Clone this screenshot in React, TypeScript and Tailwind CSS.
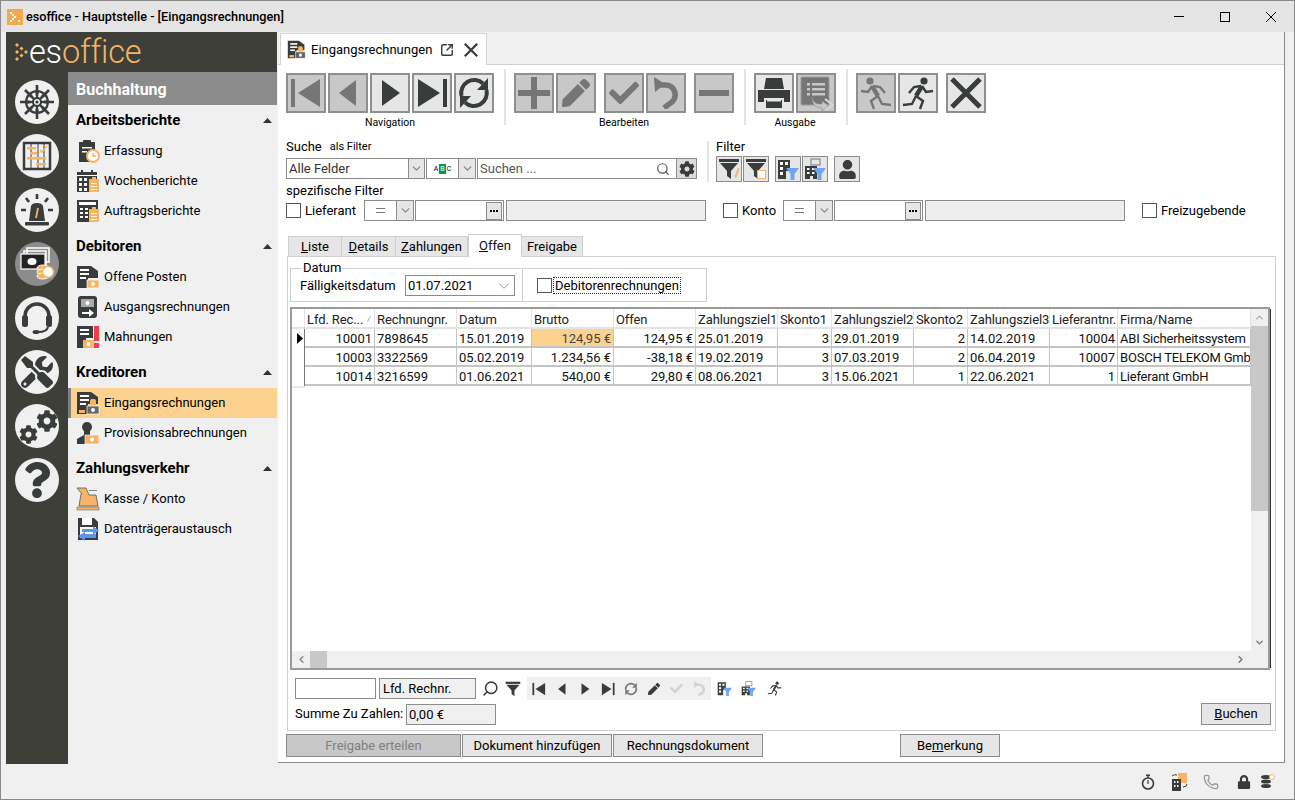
import React from "react";
import { FaCog, FaTools, FaQuestion, FaUser, FaPen, FaCheck, FaLock } from "react-icons/fa";
import { SquareArrowOutUpRight, ChevronDown, ChevronUp, ChevronLeft, ChevronRight, Search, Phone } from "lucide-react";

const DARK = "#383d3b";
const OR = "#f5b565";

const Svg = ({ s = 24, children, vb = "0 0 24 24", className = "" }: { s?: number; children: React.ReactNode; vb?: string; className?: string }) => (
  <svg width={s} height={s} viewBox={vb} className={`shrink-0 ${className}`}>{children}</svg>
);

type NavP = { c: string; s?: number };
const First = ({ c, s = 32 }: NavP) => <Svg s={s} vb="0 0 32 32"><rect x="1" y="2" width="4" height="28" fill={c} /><path d="M30 2V30L8 16Z" fill={c} /></Svg>;
const Prev = ({ c, s = 32 }: NavP) => <Svg s={s} vb="0 0 32 32"><path d="M24 3V29L7 16Z" fill={c} /></Svg>;
const Next = ({ c, s = 32 }: NavP) => <Svg s={s} vb="0 0 32 32"><path d="M8 3V29L26 16Z" fill={c} /></Svg>;
const Last = ({ c, s = 32 }: NavP) => <Svg s={s} vb="0 0 32 32"><rect x="27" y="2" width="4" height="28" fill={c} /><path d="M2 2V30L24 16Z" fill={c} /></Svg>;
const Sync = ({ c, s = 34 }: NavP) => (
  <Svg s={s} vb="0 0 34 34">
    <path d="M4.5 20A13 13 0 0 1 26 7.5" fill="none" stroke={c} strokeWidth="4" />
    <path d="M29.5 14A13 13 0 0 1 8 26.5" fill="none" stroke={c} strokeWidth="4" />
    <path d="M31 2V14H20Z" fill={c} /><path d="M3 32V20H14Z" fill={c} />
  </Svg>
);
const Undo = ({ c, s = 32 }: NavP) => (
  <Svg s={s} vb="0 0 32 32">
    <path d="M9 8H15C25 8 28 19 22 25L14 31" fill="none" stroke={c} strokeWidth="5.5" />
    <path d="M4 0L5 15L15 7Z" fill={c} />
  </Svg>
);
const Runner = ({ c, s = 34, mirror = false }: { c: string; s?: number; mirror?: boolean }) => (
  <Svg s={s} vb="0 0 34 34" className={mirror ? "-scale-x-100" : ""}>
    <circle cx="23" cy="5" r="3.6" fill={c} />
    <path d="M21 10L15 20" stroke={c} strokeWidth="4.4" fill="none" />
    <path d="M20 10L13 11L8 17M21 10L25 16L32 15M15 20L22 25L19 33M15 20L11 28L2 29" stroke={c} strokeWidth="2.4" fill="none" />
  </Svg>
);
const DocSend = ({ c }: { c: string }) => (
  <Svg s={36} vb="0 0 36 36">
    <rect x="3" y="2" width="28" height="28" rx="1" fill={c} stroke="#9a9a9a" strokeWidth="1" />
    <g fill="#c8c8c8"><rect x="9" y="8" width="3" height="2.5" /><rect x="14" y="8" width="13" height="2.5" /><rect x="9" y="13" width="3" height="2.5" /><rect x="14" y="13" width="13" height="2.5" /><rect x="9" y="18" width="3" height="2.5" /><rect x="14" y="18" width="13" height="2.5" /></g>
    <path d="M14 22Q15 30 24 29V26L31 31L24 36V33Q14 33 14 22Z" fill="#c8c8c8" stroke="#8a8a8a" strokeWidth=".6" />
    <path d="M27 24L35 30L27 35" fill="none" stroke="#d8d8d8" strokeWidth="2" />
  </Svg>
);
const Printer = () => (
  <Svg s={34} vb="0 0 34 34">
    <path d="M9 2H25L27 13H7Z" fill={DARK} />
    <path d="M1 14H33V26H27V22H7V26H1Z" fill={DARK} />
    <rect x="9" y="24" width="16" height="8" fill={DARK} />
    <rect x="10" y="24" width="14" height="1.5" fill="#e6e6e6" />
  </Svg>
);
const Cross = ({ c = DARK, s = 36, w = 5, className = "" }: { c?: string; s?: number; w?: number; className?: string }) => (
  <Svg s={s} vb="0 0 36 36" className={className}><path d="M4 4L32 32M32 4L4 32" stroke={c} strokeWidth={w} fill="none" /></Svg>
);
const Plus = ({ c }: { c: string }) => <Svg s={34} vb="0 0 34 34"><path d="M14 1H20V14H33V20H20V33H14V20H1V14H14Z" fill={c} /></Svg>;
const Minus = ({ c }: { c: string }) => <Svg s={32} vb="0 0 32 32"><rect x="1" y="13" width="30" height="6" fill={c} /></Svg>;

const Funnel = ({ c = DARK, s = 22 }: { c?: string; s?: number }) => (
  <Svg s={s} vb="0 0 22 22"><rect x="1" y="1" width="20" height="3" fill={c} /><path d="M2 5H20L13 13V21L9 18V13Z" fill={c} /></Svg>
);
const Build = ({ s = 22, stack = false, blue = "#6fa5f5" }: { s?: number; stack?: boolean; blue?: string }) => (
  <Svg s={s} vb="0 0 22 22">
    {stack && <g fill="none" stroke="#777"><rect x="7" y="1" width="9" height="6" /></g>}
    <path d={stack ? "M1 8H13V21H9V18H6V21H1Z" : "M1 2H13V13H9V21H1Z"} fill={DARK} />
    <g fill="#fff">{stack ? <><rect x="3" y="10" width="2.5" height="2" /><rect x="8" y="10" width="2.5" height="2" /><rect x="3" y="14" width="2.5" height="2" /><rect x="8" y="14" width="2.5" height="2" /></> : <><rect x="3" y="4" width="3" height="3" /><rect x="8" y="4" width="3" height="3" /><rect x="3" y="9" width="3" height="3" /><rect x="3" y="14" width="3" height="3" /></>}</g>
    <path d="M9 10H22L17.5 16V22H13.5V16Z" fill={blue} />
  </Svg>
);

const TB = ({ dis, children }: { dis?: boolean; children: React.ReactNode }) => (
  <div className={`w-[40px] h-[40px] border-2 border-[#8f8f8f] flex items-center justify-center shrink-0 ${dis ? "bg-[#c8c8c8]" : "bg-[#e6e6e6]"}`}>{children}</div>
);
const G = "#767676";
const Sep = () => <div className="w-[2px] h-[56px] bg-[#e4e4e4] shrink-0" />;
const Lab = ({ children }: { children: React.ReactNode }) => <div className="text-[10.5px] leading-[14px] text-center mt-[3px] h-[12px]">{children}</div>;

const Toolbar = () => (
  <div className="flex items-start h-[56px] mt-[4px] pl-[8px]">
    <div className="pt-[4px] w-[208px] mr-[10px]">
      <div className="flex gap-[2px]">
        <TB dis><First c={G} /></TB><TB dis><Prev c={G} /></TB><TB><Next c={DARK} /></TB><TB><Last c={DARK} /></TB><TB><Sync c={DARK} /></TB>
      </div>
      <Lab>Navigation</Lab>
    </div>
    <Sep />
    <div className="pt-[4px] w-[220px] ml-[8px] mr-[10px]">
      <div className="flex">
        <div className="flex gap-[2px]"><TB dis><Plus c={G} /></TB><TB dis><FaPen size={28} color={G} /></TB></div>
        <div className="flex gap-[2px] ml-[8px]"><TB dis><FaCheck size={30} color={G} /></TB><TB dis><Undo c={G} /></TB></div>
        <div className="ml-[8px]"><TB dis><Minus c={G} /></TB></div>
      </div>
      <Lab>Bearbeiten</Lab>
    </div>
    <Sep />
    <div className="pt-[4px] w-[82px] ml-[8px] mr-[10px]">
      <div className="flex gap-[2px]"><TB><Printer /></TB><TB dis><DocSend c={G} /></TB></div>
      <Lab>Ausgabe</Lab>
    </div>
    <Sep />
    <div className="pt-[4px] ml-[8px] flex">
      <div className="flex gap-[2px]"><TB dis><Runner c={G} mirror /></TB><TB><Runner c={DARK} /></TB></div>
      <div className="ml-[8px]"><TB><Cross /></TB></div>
    </div>
  </div>
);

const DD = ({ w = "w-[16px]" }: { w?: string }) => (
  <div className={`${w} h-full bg-[#e6e6e6] border-l border-[#8c8c8c] flex items-center justify-center shrink-0`}><ChevronDown size={13} strokeWidth={2.5} color="#8a8a8a" /></div>
);
const Check = ({ className = "" }: { className?: string }) => <div className={`w-[15px] h-[15px] border border-[#555] bg-white shrink-0 ${className}`} />;
const Box = ({ className = "", children }: { className?: string; children?: React.ReactNode }) => <div className={`border border-[#8c8c8c] bg-white flex items-center shrink-0 ${className}`}>{children}</div>;
const FB = ({ children }: { children: React.ReactNode }) => <div className="w-[26px] h-[26px] border border-[#8c8c8c] bg-[#e6e6e6] flex items-center justify-center shrink-0 relative">{children}</div>;

const Op = () => (
  <Box className="w-[50px] h-[21px]"><div className="flex-1 flex justify-center text-[#666]"><div className="w-[9px] h-[5px] border-y border-[#777]" /></div><DD w="w-[17px]" /></Box>
);
const Picker = () => (
  <>
    <Box className="w-[89px] h-[21px] ml-px justify-end"><div className="w-[16px] h-[18px] mr-px border border-[#8c8c8c] bg-[#e6e6e6] flex items-center justify-center gap-px"><i className="w-[2px] h-[2px] bg-black" /><i className="w-[2px] h-[2px] bg-black" /><i className="w-[2px] h-[2px] bg-black" /></div></Box>
    <div className="w-[200px] h-[21px] ml-[2px] bg-[#eeeeee] border border-[#8c8c8c] shrink-0" />
  </>
);

const SearchArea = () => (
  <div className="pl-[8px]">
    <div className="flex mt-[14px] h-[43px]">
      <div className="w-[421px]">
        <div className="h-[19px] flex items-center pb-[3px]"><span>Suche</span><span className="text-[11px] ml-[8px]">als Filter</span></div>
        <div className="flex h-[21px]">
          <Box className="w-[139px] h-full pl-[2px] justify-between text-[#333]"><span>Alle Felder</span><DD /></Box>
          <Box className="w-[50px] h-full ml-px justify-between">
            <span className="flex-1 flex justify-center items-center text-[7px] leading-[10px]">A<span className="bg-[#0a9a3a] text-white px-px mx-px">B</span>C</span><DD w="w-[17px]" />
          </Box>
          <Box className="w-[200px] h-full ml-px pl-[2px] justify-between text-[#555]"><span>Suchen ...</span><Search size={14} color="#555" className="mr-[6px]" /></Box>
          <div className="w-[20px] h-full bg-[#dcdcdc] border border-[#8c8c8c] border-l-0 flex items-center justify-center"><FaCog size={16} color={DARK} /></div>
        </div>
      </div>
      <div className="w-[2px] h-[41px] mt-[2px] bg-[#e4e4e4]" />
      <div className="ml-[7px]">
        <div className="h-[17px] leading-[15px]">Filter</div>
        <div className="flex">
          <div className="flex gap-px">
            <FB><Funnel /><span className="absolute right-[3px] bottom-[3px] w-[2px] h-[10px] bg-[#f5b565] rotate-[20deg]" /></FB>
            <FB><Funnel /><span className="absolute right-[2px] bottom-[2px] w-[9px] h-[9px] border border-[#f5b565] bg-white" /></FB>
          </div>
          <div className="flex gap-px ml-[6px]"><FB><Build /></FB><FB><Build stack /></FB></div>
          <div className="ml-[6px]"><FB><FaUser size={19} color={DARK} /></FB></div>
        </div>
      </div>
    </div>
    <div className="h-[21px] -mt-[3px] leading-[24px]">spezifische Filter</div>
    <div className="flex items-center h-[21px]">
      <Check /><span className="ml-[4px] w-[59px]">Lieferant</span>
      <Op /><Picker />
      <Check className="ml-[17px]" /><span className="ml-[4px] w-[41px]">Konto</span>
      <Op /><Picker />
      <Check className="ml-[17px]" /><span className="ml-[4px]">Freizugebende</span>
    </div>
  </div>
);

const U = ({ children }: { children: React.ReactNode }) => <span className="underline">{children}</span>;
const Tab = ({ w, active, children }: { w: string; active?: boolean; children: React.ReactNode }) => (
  <div className={`${w} flex items-center justify-center shrink-0 border-t border-x border-[#cfcfcf] ${active ? "h-[23px] bg-white relative z-10 -mb-px text-[#111]" : "h-[20px] bg-[#e6e6e6] -ml-px first:ml-0"}`}>{children}</div>
);

const widths = ["w-[13px]", "w-[70px]", "w-[82px]", "w-[75px]", "w-[82px]", "w-[82px]", "w-[82px]", "w-[54px]", "w-[82px]", "w-[54px]", "w-[82px]", "w-[68px]", "w-[133px]"];
const head = ["", "Lfd. Rec...", "Rechnungnr.", "Datum", "Brutto", "Offen", "Zahlungsziel1", "Skonto1", "Zahlungsziel2", "Skonto2", "Zahlungsziel3", "Lieferantnr.", "Firma/Name"];
const rows = [
  ["10001", "7898645", "15.01.2019", "124,95 €", "124,95 €", "25.01.2019", "3", "29.01.2019", "2", "14.02.2019", "10004", "ABI Sicherheitssystem"],
  ["10003", "3322569", "05.02.2019", "1.234,56 €", "-38,18 €", "19.02.2019", "3", "07.03.2019", "2", "06.04.2019", "10007", "BOSCH TELEKOM Gmb"],
  ["10014", "3216599", "01.06.2021", "540,00 €", "29,80 €", "08.06.2021", "3", "15.06.2021", "1", "22.06.2021", "1", "Lieferant GmbH"],
];
const right = new Set([0, 3, 4, 6, 8, 10]);

const Grid = () => (
  <div className="ml-[2px] mt-[5px] w-[980px] h-[363px] border-2 border-[#9a9a9a] flex flex-col relative after:content-[''] after:absolute after:right-[-3px] after:top-0 after:bottom-0 after:w-px after:bg-[#333]">
    <div className="flex flex-1 min-h-0">
      <div className="w-[959px] overflow-hidden">
        <table className="table-fixed border-separate border-spacing-0 w-[959px]">
          <thead>
            <tr>
              {head.map((h, i) => (
                <th key={i} className={`${widths[i]} h-[20px] font-normal text-left pl-[2px] pr-0 pt-[3px] pb-0 leading-[15px] tracking-[-0.1px] border-r border-b-2 border-[#e4e4e4] whitespace-nowrap overflow-hidden text-[#222]`}>
                  {i === 1 ? <span className="flex items-center justify-between pr-[3px]">{h}<span className="text-[9px] text-[#777]">⁄</span></span> : h}
                </th>
              ))}
            </tr>
          </thead>
          <tbody>
            {rows.map((r, ri) => (
              <tr key={ri}>
                <td className="h-[19px] border-r border-r-[#777] p-0 w-[13px]">
                  {ri === 0 && <svg width="6" height="11" viewBox="0 0 6 11" className="ml-[5px]"><path d="M0 0L6 5.5L0 11Z" fill="#000" /></svg>}
                </td>
                {r.map((c, i) => (
                  <td key={i} className={`h-[19px] pt-[2px] pb-0 pl-[2px] ${i === 11 ? "pr-0 tracking-[-0.2px]" : "pr-[2px]"} leading-[15px] border-b-2 border-r border-[#c4c4c4] whitespace-nowrap overflow-hidden ${right.has(i) ? "text-right" : "text-left"} ${ri === 0 && i === 3 ? "bg-[#fdd28f] text-[#444]" : "text-[#111]"}`}>{c}</td>
                ))}
              </tr>
            ))}
            <tr><td className="h-[2px] p-0 bg-[#ececec]" /></tr>
          </tbody>
        </table>
      </div>
      <div className="w-[17px] bg-[#f0f0f0] flex flex-col items-center shrink-0">
        <div className="h-[17px] flex items-center"><ChevronUp size={11} strokeWidth={3} color="#aaa" /></div>
        <div className="h-[185px] w-full bg-[#c8c8c8]" />
        <div className="flex-1" />
        <div className="h-[17px] flex items-center"><ChevronDown size={11} strokeWidth={3} color="#777" /></div>
      </div>
    </div>
    <div className="h-[17px] bg-[#f0f0f0] flex items-center shrink-0">
      <div className="w-[18px] flex justify-center"><ChevronLeft size={11} strokeWidth={3} color="#888" /></div>
      <div className="w-[17px] h-full bg-[#c8c8c8]" />
      <div className="flex-1" />
      <div className="w-[20px] flex justify-center"><ChevronRight size={11} strokeWidth={3} color="#777" /></div>
      <div className="w-[18px]" />
    </div>
  </div>
);

const Mini = ({ children, w = "w-[23px]" }: { children: React.ReactNode; w?: string }) => <div className={`${w} flex justify-center items-center shrink-0`}>{children}</div>;
const BottomBar = () => (
  <div className="pl-[7px] pr-[4px]">
    <div className="flex items-center h-[21px] mt-[8px]">
      <Box className="w-[81px] h-[21px]" />
      <div className="w-[97px] h-[21px] ml-[3px] bg-[#f0f0f0] border border-[#8c8c8c] pl-[3px] leading-[19px] shrink-0">Lfd. Rechnr.</div>
      <Search size={17} strokeWidth={2.2} color={DARK} className="ml-[6px] -scale-x-100 shrink-0" />
      <div className="ml-[6px]"><Funnel s={16} c={DARK} /></div>
      <div className="ml-[6px] h-[23px] w-[184px] bg-[#f0f0f0] flex items-center shrink-0">
        <Mini><First c={DARK} s={14} /></Mini>
        <Mini><Prev c={DARK} s={14} /></Mini>
        <Mini><Next c={DARK} s={14} /></Mini>
        <Mini><Last c={DARK} s={14} /></Mini>
        <Mini><Sync c={G} s={14} /></Mini>
        <Mini><FaPen size={12} color={DARK} /></Mini>
        <Mini><FaCheck size={13} color="#d4d4d4" /></Mini>
        <Mini><Undo c="#d4d4d4" s={15} /></Mini>
      </div>
      <Mini w="w-[26px]"><Build s={15} /></Mini>
      <Mini><Build s={15} stack /></Mini>
      <Mini w="w-[28px]"><Runner c={DARK} s={15} /></Mini>
    </div>
    <div className="flex items-center justify-between h-[22px] mt-[4px]">
      <div className="flex items-center">
        <span className="w-[111px]">Summe Zu Zahlen:</span>
        <div className="w-[90px] h-[21px] bg-[#f0f0f0] border border-[#8c8c8c] pl-[2px] leading-[19px]">0,00 €</div>
      </div>
      <div className="w-[70px] h-[22px] bg-[#e6e6e6] border border-[#8c8c8c] flex items-center justify-center"><span><U>B</U>uchen</span></div>
    </div>
  </div>
);

const Btn = ({ w, dis, className = "", children }: { w: string; dis?: boolean; className?: string; children: React.ReactNode }) => (
  <div className={`${w} h-[23px] border border-[#8c8c8c] flex items-center justify-center shrink-0 ${dis ? "bg-[#c8c8c8] text-[#808080]" : "bg-[#e6e6e6]"} ${className}`}>{children}</div>
);

const Content = () => (
  <div className="w-[1007px] bg-white border-r border-b border-[#8a8a8a] mb-[1px] flex flex-col">
    <div className="h-[33px] bg-[#f0f0f0] border-b border-[#cfcfcf] pl-[2px] flex items-end shrink-0">
      <div className="w-[207px] h-[32px] -mb-px bg-white border-t border-x border-[#d4d4d4] flex items-center pl-[6px]">
        <DocMoney s={19} />
        <span className="ml-[5px] w-[129px] leading-[17px] whitespace-nowrap">Eingangsrechnungen</span>
        <SquareArrowOutUpRight size={14} strokeWidth={2.4} color={DARK} className="shrink-0" />
        <Cross s={16} w={5} className="ml-[9px]" />
      </div>
    </div>
    <Toolbar />
    <SearchArea />
    <div className="ml-[10px] mt-[13px] flex items-end h-[22px]">
      <Tab w="w-[54px]"><U>L</U>iste</Tab>
      <Tab w="w-[55px]"><U>D</U>etails</Tab>
      <Tab w="w-[73px]"><U>Z</U>ahlungen</Tab>
      <Tab w="w-[54px]" active><U>O</U>ffen</Tab>
      <Tab w="w-[62px]">Freigabe</Tab>
    </div>
    <div className="ml-[9px] w-[989px] h-[475px] border border-[#cfcfcf] shrink-0">
      <div className="ml-[2px] mt-[11px] w-[417px] h-[34px] border border-[#cfcfcf] flex items-center relative">
        <span className="absolute left-[11px] -top-[9px] bg-white px-px leading-[16px]">Datum</span>
        <div className="w-[232px] h-full border-r border-[#cfcfcf] flex items-center pl-[9px] pt-[1px]">
          <span className="w-[105px]">Fälligkeitsdatum</span>
          <Box className="w-[110px] h-[21px] pl-[2px] justify-between"><span>01.07.2021</span><ChevronDown size={18} strokeWidth={1} color="#777" className="mr-px" /></Box>
        </div>
        <Check className="ml-[14px] border-[#444]" />
        <span className="ml-[2px] outline-1 outline-dotted outline-[#333] leading-[15px] px-px">Debitorenrechnungen</span>
      </div>
      <Grid />
      <BottomBar />
    </div>
    <div className="flex ml-[8px] mt-[3px]">
      <Btn w="w-[175px]" dis>Freigabe erteilen</Btn>
      <Btn w="w-[150px]" className="ml-px">Dokument hinzufügen</Btn>
      <Btn w="w-[150px]" className="ml-px">Rechnungsdokument</Btn>
      <Btn w="w-[100px]" className="ml-[137px]"><span>Be<U>m</U>erkung</span></Btn>
    </div>
  </div>
);

function DocMoney({ s = 24, variant = "in" }: { s?: number; variant?: string }) {
  return (
    <Svg s={s} vb="0 0 24 24">
      <path d="M1 1H15L22 6V13H12V23H1Z" fill={DARK} />
      <g fill="#fff"><rect x="4" y="4" width="9" height="2" /><rect x="4" y="8" width="9" height="2" /><rect x="4" y="12" width="6" height="2" /></g>
      {variant === "in" && <rect x="14" y="8" width="6" height="8" rx="2" fill={OR} />}
      {variant === "in" && <rect x="3" y="19" width="6" height="3" fill={OR} />}
      <rect x="11" y="15" width="12" height="8" fill={variant === "in" ? "#666" : OR} stroke="#fff" strokeWidth=".7" />
      <circle cx="17" cy="19" r="2" fill="#fff" />
    </Svg>
  );
}
const ClipO = () => (
  <g><rect x="13" y="10" width="10" height="13" fill={OR} /><rect x="16" y="8" width="4" height="3" fill={OR} /><g fill="#fff"><rect x="15" y="14" width="6" height="1" /><rect x="15" y="17" width="6" height="1" /><rect x="15" y="20" width="6" height="1" /></g></g>
);
const IconMap: Record<string, React.ReactNode> = {
  Erfassung: <Svg><rect x="3" y="3" width="16" height="20" fill={DARK} /><rect x="7" y="1" width="8" height="4" rx="1" fill={DARK} /><g fill="#fff"><rect x="6" y="8" width="10" height="1.5" /><rect x="6" y="12" width="5" height="1.5" /></g><circle cx="17" cy="17" r="6" fill="#fff" stroke={OR} strokeWidth="2" /><path d="M17 14V17H20" fill="none" stroke={OR} strokeWidth="1.5" /></Svg>,
  Wochenberichte: <Svg><rect x="1" y="3" width="20" height="20" fill={DARK} /><rect x="5" y="1" width="2" height="4" fill={DARK} /><rect x="15" y="1" width="2" height="4" fill={DARK} /><rect x="1" y="6" width="20" height="1" fill="#fff" /><g fill="#fff"><rect x="3" y="9" width="3" height="3" /><rect x="8" y="9" width="3" height="3" /><rect x="3" y="14" width="3" height="3" /><rect x="8" y="14" width="3" height="3" /><rect x="3" y="19" width="3" height="3" /><rect x="8" y="19" width="3" height="3" /></g><ClipO /></Svg>,
  Auftragsberichte: <Svg><rect x="1" y="1" width="21" height="22" fill={DARK} /><rect x="3" y="3" width="17" height="3" fill="#fff" /><g fill="#fff"><rect x="4" y="9" width="3" height="2" /><rect x="9" y="9" width="3" height="2" /><rect x="4" y="13" width="3" height="2" /><rect x="9" y="13" width="3" height="2" /><rect x="4" y="17" width="3" height="2" /><rect x="9" y="17" width="3" height="2" /></g><ClipO /></Svg>,
  "Offene Posten": <DocMoney variant="out" />,
  Ausgangsrechnungen: <Svg><rect x="2" y="1" width="19" height="22" rx="3" fill={DARK} /><rect x="5" y="4" width="13" height="8" fill="#aaa" /><circle cx="11.5" cy="8" r="2" fill="#fff" /><path d="M6 17H13V14L18 18L13 22V19H6Z" fill="#fff" /></Svg>,
  Mahnungen: <Svg><path d="M1 1H17V13H10V23H1Z" fill={DARK} /><g fill="#fff"><rect x="4" y="4" width="9" height="2" /><rect x="4" y="8" width="9" height="2" /></g><rect x="7" y="15" width="11" height="8" fill={OR} /><circle cx="12.5" cy="19" r="2" fill="#fff" /><rect x="18" y="1" width="5" height="15" fill="#ef3f4a" /><rect x="18" y="18" width="5" height="5" fill="#ef3f4a" /></Svg>,
  Eingangsrechnungen: <DocMoney />,
  Provisionsabrechnungen: <Svg><circle cx="11" cy="6" r="5" fill={DARK} /><path d="M8 9H14V14H8Z" fill={DARK} /><path d="M1 23V18L8 14H12V23Z" fill={DARK} /><rect x="9" y="14" width="14" height="9" fill={OR} stroke="#fff" strokeWidth=".6" /><circle cx="16" cy="18.5" r="2" fill="#fff" /></Svg>,
  "Kasse / Konto": <Svg><path d="M1 1H10L13 8H20L22 19H3L5 7H6Z" fill={OR} stroke="#555" strokeWidth=".8" /><rect x="1" y="20" width="22" height="3" fill={OR} stroke="#555" strokeWidth=".5" /><rect x="13" y="3" width="8" height="1" fill="#888" /></Svg>,
  Datenträgeraustausch: <Svg><path d="M2 1H18L22 5V23H2Z" fill={DARK} /><rect x="6" y="1" width="10" height="7" fill="#fff" /><rect x="4" y="10" width="16" height="11" fill="#fff" /><path d="M6 12H17V9L23 13.5L17 18V15H6Z" fill="#5c96ec" /><path d="M20 17H9V15L2 19L9 24V21H20Z" fill="#5c96ec" /></Svg>,
};

const groups: [string, string[]][] = [
  ["Arbeitsberichte", ["Erfassung", "Wochenberichte", "Auftragsberichte"]],
  ["Debitoren", ["Offene Posten", "Ausgangsrechnungen", "Mahnungen"]],
  ["Kreditoren", ["Eingangsrechnungen", "Provisionsabrechnungen"]],
  ["Zahlungsverkehr", ["Kasse / Konto", "Datenträgeraustausch"]],
];

const SubPanel = () => (
  <div className="w-[209px] bg-[#f0f0f0] flex flex-col">
    <div className="h-[33px] bg-[#8c8c8c] text-white font-bold text-[16px] leading-[35px] pl-[8px]">Buchhaltung</div>
    {groups.map(([g, items]) => (
      <div key={g} className="mb-[5px]">
        <div className="h-[31px] flex items-center justify-between pl-[8px] pr-[5px] font-bold text-[15px]">
          <span>{g}</span>
          <svg width="9" height="5" viewBox="0 0 9 5"><path d="M0 5L4.5 0L9 5Z" fill="#333" /></svg>
        </div>
        {items.map((it) =>
          it === "Eingangsrechnungen" ? (
            <div key={it} className="h-[30px] flex items-center gap-[4px] bg-[#fdd28f] border-l-[3px] border-[#808080] pl-[5px]">
              {IconMap[it]}
              <span>{it}</span>
            </div>
          ) : (
            <div key={it} className="h-[30px] flex items-center gap-[4px] pl-[8px]">
              {IconMap[it]}
              <span>{it}</span>
            </div>
          )
        )}
      </div>
    ))}
  </div>
);

const Wheel = () => (
  <Svg s={36} vb="0 0 36 36">
    <g stroke={DARK} strokeWidth="2.6">
      <path d="M18 1V35M1 18H35M6 6L30 30M30 6L6 30" />
    </g>
    <circle cx="18" cy="18" r="12" fill={DARK} />
    <g fill="#f0f0f0">
      {[0, 45, 90, 135, 180, 225, 270, 315].map((a) => (
        <path key={a} d="M16 8.5A10 10 0 0 1 20 8.5L19 13H17Z" transform={`rotate(${a + 22.5} 18 18)`} />
      ))}
    </g>
    <circle cx="18" cy="18" r="3" fill="#f0f0f0" /><circle cx="18" cy="18" r="1.6" fill={DARK} />
  </Svg>
);
const Headset = () => (
  <Svg s={34} vb="0 0 34 34">
    <path d="M5 18V15A12 12 0 0 1 29 15V18" fill="none" stroke={DARK} strokeWidth="3.4" />
    <rect x="2" y="14" width="6" height="12" rx="2.5" fill={DARK} /><rect x="26" y="14" width="6" height="12" rx="2.5" fill={DARK} />
    <path d="M28 26Q27 31 18 31" fill="none" stroke={DARK} strokeWidth="2" /><ellipse cx="16" cy="31" rx="3.5" ry="2" fill={DARK} />
  </Svg>
);
const Siren = () => (
  <Svg s={36} vb="0 0 36 36">
    <path d="M10 29L12 14Q13 11 18 11Q23 11 24 14L26 29Z" fill={DARK} /><rect x="6" y="30" width="24" height="3.5" rx="1" fill={DARK} />
    <path d="M19 16L17 26" stroke={OR} strokeWidth="1.8" />
    <path d="M18 2V7M7 6L10 10M29 6L26 10M2 18H7M29 18H34" stroke={DARK} strokeWidth="2.6" />
  </Svg>
);
const Board = () => (
  <Svg s={30} vb="0 0 30 30">
    <rect x="2" y="2" width="26" height="26" fill="none" stroke={DARK} strokeWidth="2.5" />
    <g stroke={DARK} strokeWidth="1"><path d="M9 3V27M16 3V27M22 3V27" /></g>
    <g fill={OR}><rect x="5" y="6" width="9" height="2.5" /><rect x="8" y="11" width="7" height="2.5" /><rect x="5" y="16" width="19" height="2.5" /><rect x="14" y="22" width="10" height="2.5" /></g>
    <path d="M18 9L20 11L25 5" fill="none" stroke={OR} strokeWidth="1.6" />
  </Svg>
);
const Money = () => (
  <Svg s={36} vb="0 0 36 36">
    <g fill="none" stroke="#fff" strokeWidth="1.5"><rect x="8" y="2" width="22" height="14" /><rect x="5" y="5" width="22" height="14" /></g>
    <rect x="2" y="8" width="24" height="15" fill="#222" stroke="#fff" strokeWidth="1.2" /><ellipse cx="13" cy="15.5" rx="4.5" ry="3.5" fill="#fff" />
    <ellipse cx="24" cy="22" rx="6" ry="3" fill={OR} stroke="#fff" /><ellipse cx="24" cy="26" rx="6" ry="3" fill={OR} stroke="#fff" /><ellipse cx="24" cy="30" rx="6" ry="3" fill={OR} stroke="#fff" />
    <circle cx="29" cy="26" r="5.5" fill="#fff" stroke={OR} strokeWidth="1.5" />
  </Svg>
);
const Cogs = () => (
  <div className="flex items-end w-[36px] h-[36px]">
    <FaCog size={19} color={DARK} className="shrink-0 -mr-[2px]" />
    <FaCog size={22} color={DARK} className="shrink-0 -translate-y-[12px]" />
  </div>
);
const rail: [React.ReactNode, boolean?][] = [
  [<Wheel />],
  [<Board />],
  [<Siren />],
  [<Money />, true],
  [<Headset />],
  [<FaTools size={32} color={DARK} />],
  [<Cogs />],
  [<FaQuestion size={36} color={DARK} />],
];

const Logo = () => (
  <div className="h-[40px] flex items-center pl-[9px] shrink-0">
    <svg width="13" height="20" viewBox="0 0 13 20" className="shrink-0">
      <g fill={OR}>
        <path d="M2 1L4 3L2 5L0 3Z" /><path d="M2 8L4 10L2 12L0 10Z" /><path d="M2 15L4 17L2 19L0 17Z" />
        <path d="M6.5 4.5L8.5 6.5L6.5 8.5L4.5 6.5Z" /><path d="M6.5 11.5L8.5 13.5L6.5 15.5L4.5 13.5Z" /><path d="M11 8L13 10L11 12L9 10Z" />
      </g>
    </svg>
    <span className="text-[32.5px] font-light leading-[40px] tracking-[-0.2px] ml-[1px]"><span className="text-white">es</span><span className="text-[#f5b565]">office</span></span>
  </div>
);

const Side = () => (
  <div className="w-[271px] mr-[1px] bg-[#3f3f3a] flex flex-col shrink-0">
    <Logo />
    <div className="flex flex-1 min-h-0">
      <div className="w-[62px] flex flex-col items-center gap-[10px] pt-[8px] shrink-0">
        {rail.map(([ic, act], i) => (
          <div key={i} className={`w-[44px] h-[44px] rounded-full flex items-center justify-center shrink-0 ${act ? "bg-[#8c8c8c]" : "bg-[#f0f0f0]"}`}>{ic}</div>
        ))}
      </div>
      <SubPanel />
    </div>
  </div>
);

export default function App() {
  return (
    <div className="w-[1295px] h-[800px] border border-[#8a8a8a] bg-[#f0f0f0] flex flex-col overflow-hidden text-[13px] text-black font-['Roboto',sans-serif]">
      <div className="h-[31px] bg-[#e4e4e4] flex items-center shrink-0">
        <svg width="16" height="16" viewBox="0 0 16 16" className="ml-[6px] shrink-0"><rect width="16" height="16" fill="#f5a94e" /><g fill="#fff"><rect x="3" y="3" width="2" height="2" /><rect x="5" y="5" width="2" height="2" /><rect x="7" y="7" width="2" height="2" /><rect x="5" y="9" width="2" height="2" /><rect x="3" y="11" width="2" height="2" /><rect x="11" y="11" width="2" height="2" /></g></svg>
        <span className="ml-[3px] font-medium text-[12.7px] flex-1">esoffice - Hauptstelle - [Eingangsrechnungen]</span>
        <div className="w-[46px] flex justify-center"><div className="w-[10px] h-px bg-black" /></div>
        <div className="w-[46px] flex justify-center"><div className="w-[10px] h-[10px] border border-black" /></div>
        <div className="w-[46px] flex justify-center"><svg width="10" height="10" viewBox="0 0 10 10"><path d="M0 0L10 10M10 0L0 10" stroke="#000" /></svg></div>
      </div>
      <div className="h-[732px] flex pl-[5px] shrink-0">
        <Side />
        <Content />
      </div>
      <div className="flex-1 flex items-center justify-end pr-[19px]">
        <Svg s={16} vb="0 0 16 16" className="mr-[13px]">
          <circle cx="8" cy="9.5" r="5.5" fill="none" stroke={DARK} strokeWidth="1.6" /><rect x="6" y="0.5" width="4" height="1.6" fill={DARK} /><rect x="7.3" y="2" width="1.4" height="2" fill={DARK} /><rect x="7.4" y="6" width="1.2" height="4" fill={DARK} />
        </Svg>
        <Svg s={20} vb="0 0 20 20" className="mr-[14px]">
          <rect x="9" y="1" width="9" height="10" fill={OR} /><rect x="3" y="7" width="9" height="12" fill={DARK} />
          <g fill="#f0f0f0"><rect x="5" y="9" width="1.5" height="2" /><rect x="8" y="9" width="1.5" height="2" /><rect x="5" y="13" width="1.5" height="2" /><rect x="8" y="13" width="1.5" height="2" /></g>
          <path d="M14 15Q18 15 18 12M3 4Q5 2 8 3" fill="none" stroke={DARK} />
        </Svg>
        <Phone size={16} color="#9a9a9a" className="mr-[18px]" />
        <FaLock size={14} color={DARK} className="mr-[9px]" />
        <Svg s={15} vb="0 0 15 15"><g fill={DARK}><ellipse cx="6" cy="3" rx="5" ry="2" /><ellipse cx="6" cy="7.5" rx="5" ry="2" /><ellipse cx="6" cy="12" rx="5" ry="2" /></g><circle cx="12" cy="3" r="2.5" fill="#fff" stroke={OR} /></Svg>
      </div>
    </div>
  );
}
